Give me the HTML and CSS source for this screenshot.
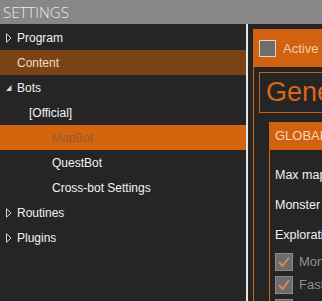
FILE: index.html
```html
<!DOCTYPE html>
<html lang="en">
<head>
  <meta charset="UTF-8" />
  <title>Settings</title>
  <link rel="stylesheet" href="styles.css">
</head>
<body>

  <header class="titlebar">SETTINGS</header>

  <div class="main">
    <ul class="tree">
      <li class="node"><svg class="arrow" viewBox="0 0 6 10"><path d="M0.5 0.8 L5 5 L0.5 9.2 Z" fill="none" stroke="#d8d8d8" stroke-width="1"/></svg>Program</li>
      <li class="node node-sel">Content</li>
      <li class="node"><svg class="arrow" viewBox="0 0 6 10"><path d="M5.5 2 L5.5 8 L0 8 Z" fill="#d8d8d8"/></svg>Bots</li>
      <li class="node lvl1">[Official]</li>
      <li class="node lvl2 node-active">MapBot</li>
      <li class="node lvl2">QuestBot</li>
      <li class="node lvl2">Cross-bot Settings</li>
      <li class="node"><svg class="arrow" viewBox="0 0 6 10"><path d="M0.5 0.8 L5 5 L0.5 9.2 Z" fill="none" stroke="#d8d8d8" stroke-width="1"/></svg>Routines</li>
      <li class="node"><svg class="arrow" viewBox="0 0 6 10"><path d="M0.5 0.8 L5 5 L0.5 9.2 Z" fill="none" stroke="#d8d8d8" stroke-width="1"/></svg>Plugins</li>
    </ul>

    <div class="divider"></div>

    <div class="content">
      <div class="panel">
        <div class="panel-head">
          <span class="box"></span>
          <span class="active-label">Active</span>
          <span class="box box-white"></span>
        </div>
        <div class="panel-body">
          <div class="title-box">General</div>

          <div class="group">
            <div class="group-head">GLOBAL</div>
            <div class="group-body">
              <div class="row">Max map</div>
              <div class="row">Monster</div>
              <div class="row">Exploration</div>
              <div class="check"><span class="cb"><svg viewBox="0 0 16 16"><path d="M3 8 L6.5 12 L13 3.5" fill="none" stroke="#e0875a" stroke-width="2"/></svg></span>Monsters</div>
              <div class="check"><span class="cb"><svg viewBox="0 0 16 16"><path d="M3 8 L6.5 12 L13 3.5" fill="none" stroke="#e0875a" stroke-width="2"/></svg></span>Fast</div>
              <div class="check"><span class="cb"></span>Other</div>
            </div>
          </div>
        </div>
      </div>
    </div>
  </div>

</body>
</html>
```

FILE: styles.css
```css
* {
  margin: 0;
  padding: 0;
  box-sizing: border-box;
}

body {
  font-family: 'Liberation Sans', Arial, sans-serif;
  font-size: 12px;
  background: #252525;
  color: #f2f2f2;
  width: 322px;
  height: 301px;
  overflow: hidden;
}

.titlebar {
  height: 24px;
  background: #878787;
  color: #ececec;
  font-family: 'Open Sans', sans-serif;
  font-weight: 300;
  font-size: 15px;
  line-height: 24px;
  padding-left: 3px;
}

.main {
  display: flex;
  height: 277px;
}

/* tree */
.tree {
  list-style: none;
  width: 246px;
  padding-top: 1px;
}

.node {
  height: 25px;
  line-height: 27px;
  padding-left: 17px;
  position: relative;
  white-space: nowrap;
}

.arrow {
  position: absolute;
  left: 6px;
  top: 8px;
  width: 6px;
  height: 10px;
}

.lvl1 { padding-left: 29px; }
.lvl2 { padding-left: 52px; }

.node-sel {
  background: #7a4416;
  color: #f3dcc4;
}

.node-active {
  background: #d4640d;
  color: #9c5a2c;
}

.divider {
  width: 2px;
  background: #e6e6e6;
}

/* right side */
.content {
  flex: 1;
  padding: 5px 0 0 5px;
  overflow: hidden;
}

.panel {
  border-left: 1px solid #d2620f;
  height: 100%;
}

.panel-head {
  height: 38px;
  background: #d2620f;
  display: flex;
  align-items: center;
  padding-left: 5px;
  gap: 7px;
}

.box {
  width: 17px;
  height: 17px;
  flex: none;
  background: #6e6e6e;
  border: 1px solid #e9d2bc;
}

.box-white {
  background: #f5f5f5;
  margin-left: 1px;
}

.active-label {
  color: #f4cca4;
  font-size: 13px;
}

.panel-body {
  padding: 5px 0 0 5px;
}

.title-box {
  border: 1px solid #c9600f;
  border-right: none;
  height: 41px;
  padding-left: 6px;
  font-size: 27px;
  line-height: 38px;
  color: #d8661c;
  white-space: nowrap;
}

.group {
  margin: 9px 0 0 10px;
  border-left: 1px solid #d2620f;
}

.group-head {
  height: 28px;
  line-height: 28px;
  background: #d2620f;
  color: #f6d6b6;
  font-size: 13px;
  padding-left: 5px;
}

.group-body {
  padding: 10px 0 0 5px;
}

.row {
  height: 30px;
  line-height: 30px;
  font-size: 12.5px;
  white-space: nowrap;
}

.check {
  display: flex;
  align-items: center;
  gap: 6px;
  height: 23px;
  color: #8e8e8e;
  font-size: 13px;
  white-space: nowrap;
}

.cb {
  width: 18px;
  height: 18px;
  flex: none;
  background: #6c6c6c;
  border: 1px solid #8a8a8a;
}

.cb svg {
  width: 16px;
  height: 16px;
  display: block;
}
```
